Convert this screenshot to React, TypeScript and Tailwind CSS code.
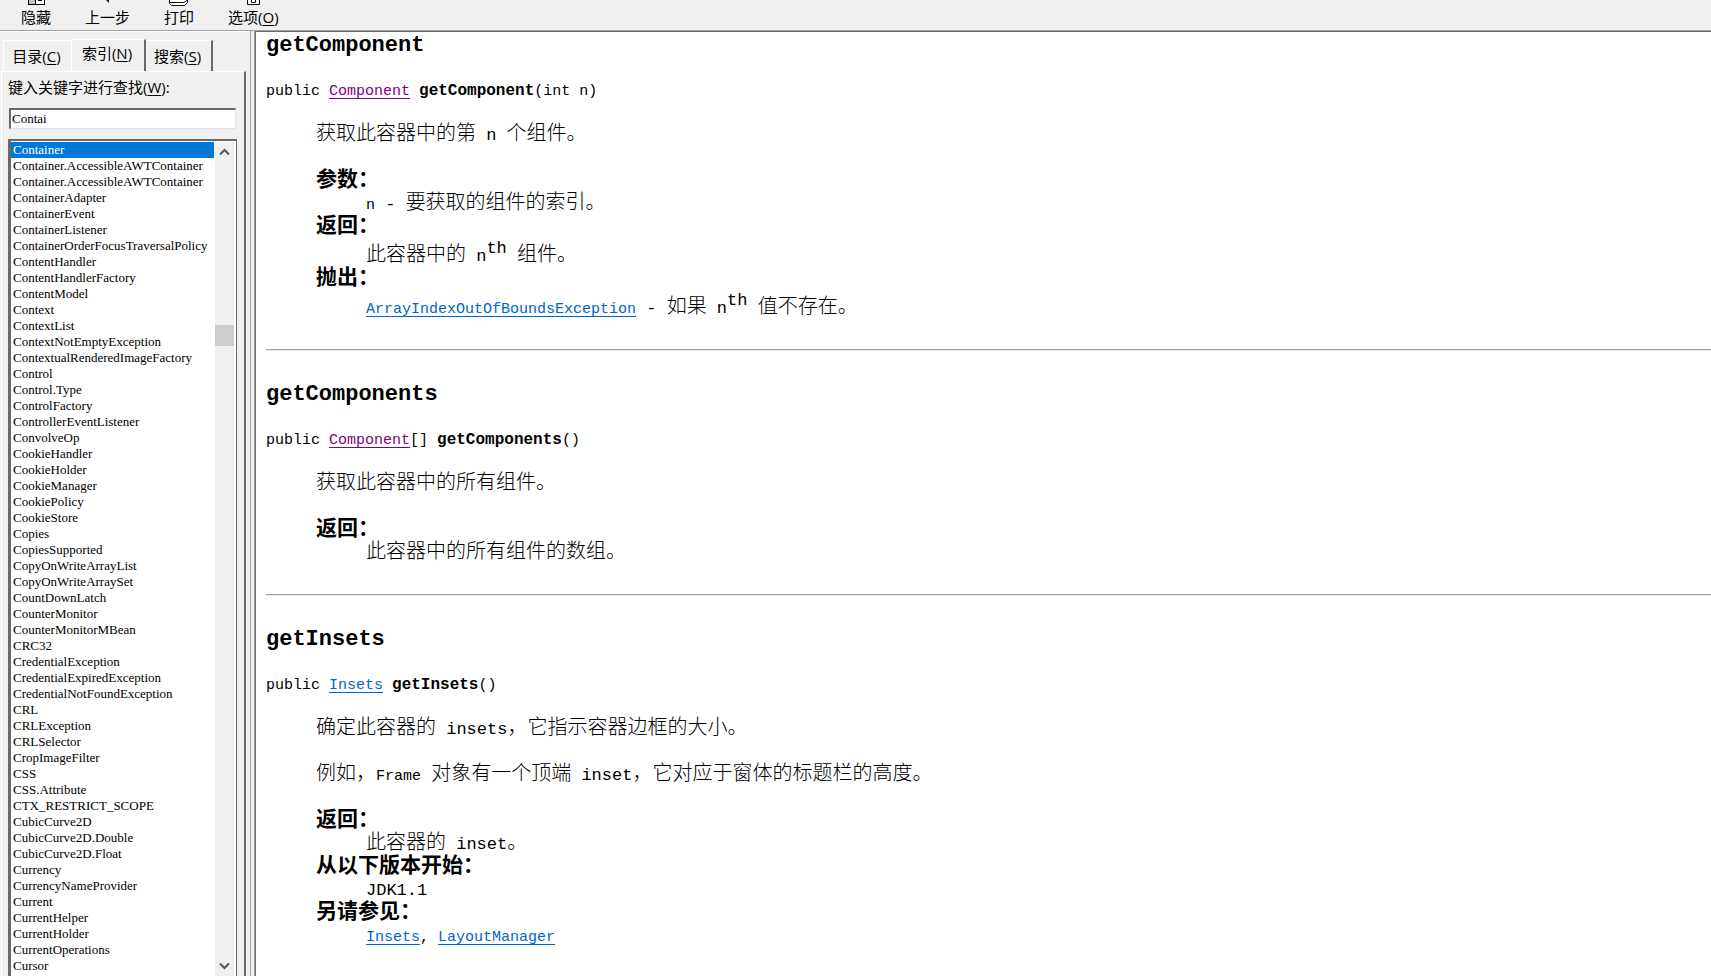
import type { ReactNode } from 'react';

const entries = [
  'Container', 'Container.AccessibleAWTContainer', 'Container.AccessibleAWTContainer', 'ContainerAdapter',
  'ContainerEvent', 'ContainerListener', 'ContainerOrderFocusTraversalPolicy', 'ContentHandler',
  'ContentHandlerFactory', 'ContentModel', 'Context', 'ContextList', 'ContextNotEmptyException',
  'ContextualRenderedImageFactory', 'Control', 'Control.Type', 'ControlFactory', 'ControllerEventListener',
  'ConvolveOp', 'CookieHandler', 'CookieHolder', 'CookieManager', 'CookiePolicy', 'CookieStore', 'Copies',
  'CopiesSupported', 'CopyOnWriteArrayList', 'CopyOnWriteArraySet', 'CountDownLatch', 'CounterMonitor',
  'CounterMonitorMBean', 'CRC32', 'CredentialException', 'CredentialExpiredException',
  'CredentialNotFoundException', 'CRL', 'CRLException', 'CRLSelector', 'CropImageFilter', 'CSS',
  'CSS.Attribute', 'CTX_RESTRICT_SCOPE', 'CubicCurve2D', 'CubicCurve2D.Double', 'CubicCurve2D.Float',
  'Currency', 'CurrencyNameProvider', 'Current', 'CurrentHelper', 'CurrentHolder', 'CurrentOperations',
  'Cursor',
];

function Key({ children }: { children: string }) {
  return <span>(<u className="underline-offset-2">{children}</u>)</span>;
}

function ToolButton({ icon, children }: { icon: ReactNode; children: ReactNode }) {
  return (
    <button type="button" className="flex flex-col items-center leading-5">
      <span className="flex h-[7px] items-start">{icon}</span>
      <span className="whitespace-nowrap">{children}</span>
    </button>
  );
}

function Mono({ children }: { children: ReactNode }) {
  return <span className="text-[17px] leading-none">{children}</span>;
}

function Code({ children }: { children: ReactNode }) {
  return <code className="font-['Liberation_Mono','Noto_Sans_CJK_SC',monospace] text-[15px] leading-none">{children}</code>;
}

function Ref({ children, visited }: { children: string; visited?: boolean }) {
  return (
    <a href="#" className={`text-[15px] leading-none underline underline-offset-3 ${visited ? 'text-[#800080]' : 'text-[#0066cc]'}`}>
      {children}
    </a>
  );
}

function Nth() {
  return (
    <Mono>
      {' n'}
      <sup className="relative -top-2 align-baseline text-[17px] leading-none">th</sup>{' '}
    </Mono>
  );
}

function Method({ name, type, suffix, args, visited, children }: {
  name: string; type: string; suffix?: string; args: string; visited?: boolean; children: ReactNode;
}) {
  return (
    <section>
      <h3 className="text-[22px] leading-6 font-bold">{name}</h3>
      <p className="mt-6 text-[15px] leading-5">
        public <Ref visited={visited}>{type}</Ref>{suffix} <b className="text-[16px] leading-none font-bold">{name}</b>{args}
      </p>
      <div className="mt-[21px] ml-[50px] flex flex-col gap-[23px]">{children}</div>
    </section>
  );
}

function Term({ children }: { children: string }) {
  return <dt className="text-[21px] font-bold">{children}</dt>;
}

function Def({ children, tall }: { children: ReactNode; tall?: boolean }) {
  return <dd className={`ml-[50px] ${tall ? 'pt-[6px]' : ''}`}>{children}</dd>;
}

function Rule() {
  return <hr className="mt-[30px] mb-8 h-[2px] border-0 border-t border-t-[#a0a0a0] bg-[#e8e8e8]" />;
}

function Chevron({ up }: { up?: boolean }) {
  return (
    <svg width="11" height="8" viewBox="0 0 11 8" fill="none" stroke="#555" strokeWidth="2">
      <path d={up ? 'M1 6.5 5.5 2 10 6.5' : 'M1 1.5 5.5 6 10 1.5'} />
    </svg>
  );
}

export default function App() {
  return (
    <div className="flex h-screen flex-col overflow-hidden bg-[#f0f0f0] font-['Open_Sans','Noto_Sans_CJK_SC',sans-serif] text-[15px] text-black">
      <header className="flex h-[30px] shrink-0 items-start gap-[34px] pl-[21px]">
        <ToolButton icon={
          <svg width="17" height="5" viewBox="0 0 17 5" shapeRendering="crispEdges">
            <path d="M0 0h17v5H0z" fill="#000" /><path d="M1 0h6v4H1z" fill="#c0c0c0" /><path d="M8 0h8v4H8z" fill="#fff" /><path d="M10 0h4v1h-4z" fill="#000" />
          </svg>
        }>隐藏</ToolButton>
        <ToolButton icon={<svg width="6" height="3" viewBox="0 0 6 3"><path d="M1 0h3v3z" fill="#111" /></svg>}>上一步</ToolButton>
        <ToolButton icon={
          <svg width="20" height="6" viewBox="0 0 20 6" fill="#fff" stroke="#111"><path d="M.5 0v3.5l2 2h13l3-3V0M1 2.500h14l3-2" /></svg>
        }>打印</ToolButton>
        <ToolButton icon={
          <svg width="13" height="5" viewBox="0 0 13 5" fill="#fff" stroke="#111"><path d="M.5 0v4.500h12V0M4.500 0v2.500h4V0" /></svg>
        }>选项<Key>O</Key></ToolButton>
      </header>

      <div className="flex min-h-0 flex-1 border-t border-[#a0a0a0]">
        <aside className="flex w-[250px] shrink-0 flex-col border-t border-white pt-[7px]">
          <div role="tablist" className="flex h-8 items-end pl-[3px]">
            <button role="tab" className="h-[31px] w-[68px] border-t border-l border-white pr-[2px]">目录<Key>C</Key></button>
            <button role="tab" aria-selected="true" className="h-8 w-[75px] border-t border-r-2 border-l border-t-white border-r-[#696969] border-l-white pr-[2px] pb-1">索引<Key>N</Key></button>
            <button role="tab" className="h-[31px] w-[67px] border-t border-r-2 border-t-white border-r-[#696969] pr-[2px]">搜索<Key>S</Key></button>
          </div>
          <div className="mr-1 ml-px flex min-h-0 flex-1 flex-col border-t border-r-2 border-l border-t-white border-r-[#696969] border-l-white pr-[7px] pl-[6px]">
            <label htmlFor="keyword" className="mt-[3px] leading-6">键入关键字进行查找(<u className="underline-offset-2">W</u>):</label>
            <input id="keyword" defaultValue="Contai" className="mt-[9px] mr-px ml-px h-[21px] border-t-2 border-r border-b border-l-2 border-t-[#696969] border-r-[#e3e3e3] border-b-[#e3e3e3] border-l-[#696969] bg-white px-px font-['Liberation_Serif',serif] text-[13px] outline-none" />
            <div className="mt-[10px] flex min-h-0 flex-1 border-t-2 border-r border-l-[3px] border-t-[#696969] border-r-[#696969] border-l-[#696969] bg-white pt-px">
              <ul className="mr-px min-w-0 flex-1 overflow-hidden font-['Liberation_Serif',serif] text-[13px] leading-4">
                {entries.map((e, i) => (
                  <li key={i} className={`pl-[2px] whitespace-nowrap ${i === 0 ? 'bg-[#0078d7] text-white' : ''}`}>{e}</li>
                ))}
              </ul>
              <div className="mr-[2px] flex w-[19px] flex-col items-center bg-[#f0f0f0] pt-[6px] pb-[6px]">
                <Chevron up />
                <span className="mt-[169px] h-[21px] w-[19px] bg-[#cdcdcd]" />
                <span className="mt-auto flex"><Chevron /></span>
              </div>
            </div>
          </div>
        </aside>

        <div className="w-[5px] shrink-0 border-x border-[#a0a0a0]" />

        <main className="min-w-0 flex-1 overflow-hidden border-t border-l border-[#696969] bg-white pt-[2px] pl-[10px] font-['Liberation_Mono','Noto_Sans_CJK_SC',monospace] text-[20px] leading-[23px] font-light">
          <Method name="getComponent" type="Component" args="(int n)" visited>
            <p>获取此容器中的第<Mono> n </Mono>个组件。</p>
            <dl>
              <Term>参数：</Term>
              <Def><Code>n</Code><Mono> - </Mono>要获取的组件的索引。</Def>
              <Term>返回：</Term>
              <Def tall>此容器中的<Nth />组件。</Def>
              <Term>抛出：</Term>
              <Def tall><Ref>ArrayIndexOutOfBoundsException</Ref><Mono> - </Mono>如果<Nth />值不存在。</Def>
            </dl>
          </Method>
          <Rule />
          <Method name="getComponents" type="Component" suffix="[]" args="()" visited>
            <p>获取此容器中的所有组件。</p>
            <dl>
              <Term>返回：</Term>
              <Def>此容器中的所有组件的数组。</Def>
            </dl>
          </Method>
          <Rule />
          <Method name="getInsets" type="Insets" args="()">
            <p>确定此容器的<Mono> insets</Mono>，它指示容器边框的大小。</p>
            <p>例如，<Code>Frame</Code><Mono> </Mono>对象有一个顶端<Mono> inset</Mono>，它对应于窗体的标题栏的高度。</p>
            <dl>
              <Term>返回：</Term>
              <Def>此容器的<Mono> inset</Mono>。</Def>
              <Term>从以下版本开始：</Term>
              <Def><Mono>JDK1.1</Mono></Def>
              <Term>另请参见：</Term>
              <Def><Ref>Insets</Ref><Code>, </Code><Ref>LayoutManager</Ref></Def>
            </dl>
          </Method>
        </main>
      </div>
    </div>
  );
}
